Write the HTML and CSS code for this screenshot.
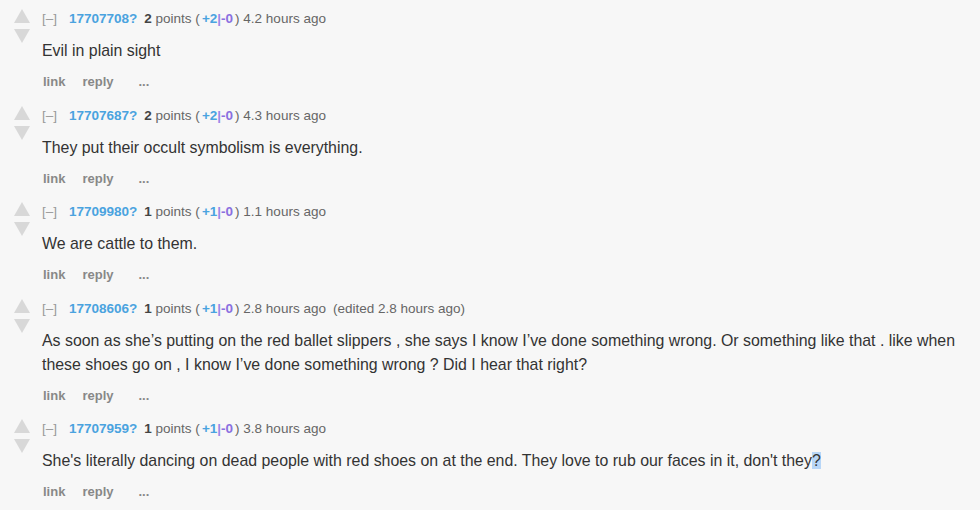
FILE: index.html
```html
<!DOCTYPE html>
<html>
<head>
<meta charset="utf-8">
<link rel="stylesheet" href="styles.css">
</head>
<body>
<div class="comments">

  <div class="comment">
    <div class="votes">
      <svg class="arrow" width="18" height="16" viewBox="0 0 18 16"><polygon points="9,1 17,15 1,15"/></svg>
      <svg class="arrow" width="18" height="16" viewBox="0 0 18 16"><polygon points="1,1 17,1 9,15"/></svg>
    </div>
    <div class="entry">
      <div class="tagline"><span class="toggle">[–]</span><span class="author">17707708?</span><span class="score"><b>2</b> points (<span class="up">+2</span><span class="sep">|</span><span class="down">-0</span>)</span> <span>4.2 hours ago</span></div>
      <div class="body">Evil in plain sight</div>
      <div class="actions"><span>link</span><span>reply</span><span class="more">...</span></div>
    </div>
  </div>

  <div class="comment">
    <div class="votes">
      <svg class="arrow" width="18" height="16" viewBox="0 0 18 16"><polygon points="9,1 17,15 1,15"/></svg>
      <svg class="arrow" width="18" height="16" viewBox="0 0 18 16"><polygon points="1,1 17,1 9,15"/></svg>
    </div>
    <div class="entry">
      <div class="tagline"><span class="toggle">[–]</span><span class="author">17707687?</span><span class="score"><b>2</b> points (<span class="up">+2</span><span class="sep">|</span><span class="down">-0</span>)</span> <span>4.3 hours ago</span></div>
      <div class="body">They put their occult symbolism is everything.</div>
      <div class="actions"><span>link</span><span>reply</span><span class="more">...</span></div>
    </div>
  </div>

  <div class="comment">
    <div class="votes">
      <svg class="arrow" width="18" height="16" viewBox="0 0 18 16"><polygon points="9,1 17,15 1,15"/></svg>
      <svg class="arrow" width="18" height="16" viewBox="0 0 18 16"><polygon points="1,1 17,1 9,15"/></svg>
    </div>
    <div class="entry">
      <div class="tagline"><span class="toggle">[–]</span><span class="author">17709980?</span><span class="score"><b>1</b> points (<span class="up">+1</span><span class="sep">|</span><span class="down">-0</span>)</span> <span>1.1 hours ago</span></div>
      <div class="body">We are cattle to them.</div>
      <div class="actions"><span>link</span><span>reply</span><span class="more">...</span></div>
    </div>
  </div>

  <div class="comment">
    <div class="votes">
      <svg class="arrow" width="18" height="16" viewBox="0 0 18 16"><polygon points="9,1 17,15 1,15"/></svg>
      <svg class="arrow" width="18" height="16" viewBox="0 0 18 16"><polygon points="1,1 17,1 9,15"/></svg>
    </div>
    <div class="entry">
      <div class="tagline"><span class="toggle">[–]</span><span class="author">17708606?</span><span class="score"><b>1</b> points (<span class="up">+1</span><span class="sep">|</span><span class="down">-0</span>)</span> <span>2.8 hours ago</span><span class="edited">(edited 2.8 hours ago)</span></div>
      <div class="body">As soon as she’s putting on the red ballet slippers , she says I know I’ve done something wrong. Or something like that . like when these shoes go on , I know I’ve done something wrong ? Did I hear that right?</div>
      <div class="actions"><span>link</span><span>reply</span><span class="more">...</span></div>
    </div>
  </div>

  <div class="comment">
    <div class="votes">
      <svg class="arrow" width="18" height="16" viewBox="0 0 18 16"><polygon points="9,1 17,15 1,15"/></svg>
      <svg class="arrow" width="18" height="16" viewBox="0 0 18 16"><polygon points="1,1 17,1 9,15"/></svg>
    </div>
    <div class="entry">
      <div class="tagline"><span class="toggle">[–]</span><span class="author">17707959?</span><span class="score"><b>1</b> points (<span class="up">+1</span><span class="sep">|</span><span class="down">-0</span>)</span> <span>3.8 hours ago</span></div>
      <div class="body">She's literally dancing on dead people with red shoes on at the end. They love to rub our faces in it, don't they<span class="sel">?</span></div>
      <div class="actions"><span>link</span><span>reply</span><span class="more">...</span></div>
    </div>
  </div>

</div>
</body>
</html>
```

FILE: styles.css
```css
html, body {
  margin: 0;
  padding: 0;
  background: #f7f7f7;
}
body {
  font-family: "Liberation Sans", Arial, Helvetica, sans-serif;
  color: #333;
}
.comments {
  padding-top: 11px;
  width: 970px;
}
.comment {
  display: flex;
  margin-bottom: 17.6px;
}
.votes {
  width: 42px;
  display: flex;
  flex-direction: column;
  align-items: flex-start;
  padding-left: 13px;
  box-sizing: border-box;
  gap: 4px;
  margin-top: -3px;
}
.arrow {
  display: block;
  fill: #d8d8d8;
}
.entry {
  flex: 1;
}
.tagline {
  font-size: 13.5px;
  line-height: 16px;
  color: #666;
  white-space: nowrap;
}
.toggle {
  color: #999;
  margin-right: 12px;
}
.author {
  color: #4aa3df;
  font-weight: bold;
  margin-right: 7px;
}
.score b {
  color: #444;
}
.up {
  color: #4aa3df;
  font-weight: bold;
  margin-left: 2px;
}
.sep {
  color: #9a8ae8;
  font-weight: bold;
}
.down {
  color: #8a6fe0;
  font-weight: bold;
  margin-right: 2px;
}
.edited {
  margin-left: 7px;
}
.body {
  margin-top: 12px;
  font-size: 15.9px;
  line-height: 24px;
  color: #333;
}
.sel {
  background: #b8d6f7;
}
.actions {
  margin-top: 11px;
  font-size: 13px;
  line-height: 16px;
  font-weight: bold;
  color: #888;
  display: flex;
  gap: 17px;
  padding-left: 1px;
}
.actions .more {
  margin-left: 8px;
}
```
